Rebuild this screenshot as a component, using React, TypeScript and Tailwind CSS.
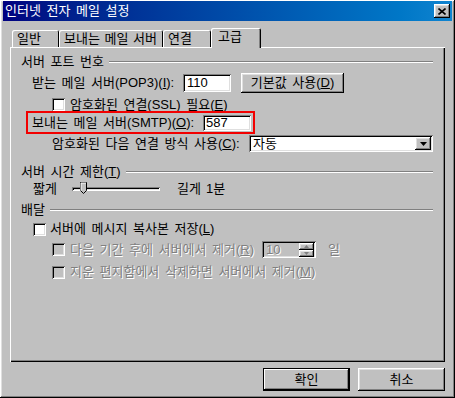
import React from 'react';

// classic 3D frames
const raised = 'shadow-[inset_-1px_-1px_#000,inset_1px_1px_#fff,inset_-2px_-2px_#808080,inset_2px_2px_#dfdfdf]';
const sunken = 'shadow-[inset_1px_1px_#808080,inset_-1px_-1px_#fff,inset_2px_2px_#000,inset_-2px_-2px_#dfdfdf]';
const dim = 'text-[#808080] [text-shadow:1px_1px_0_#fff]';

const Group: React.FC<{ children: React.ReactNode; className?: string }> = ({ children, className = '' }) => (
  <div className={`flex items-center h-[14px] ${className}`}>
    <span className="whitespace-nowrap">{children}</span>
    <div className="flex-1 ml-[5px] h-0 border-t border-b border-t-[#808080] border-b-white" />
  </div>
);

const Check: React.FC<{ disabled?: boolean }> = ({ disabled }) => (
  <div className={`w-[13px] h-[13px] shrink-0 ${disabled ? 'bg-[#c0c0c0]' : 'bg-white'} ${sunken}`} />
);

const tabs = [
  { label: '일반', w: 'w-[47px]' },
  { label: '보내는 메일 서버', w: 'w-[104px]' },
  { label: '연결', w: 'w-[48px]' },
];

export default function App() {
  return (
    <div className={`w-[455px] h-[398px] bg-[#c0c0c0] px-[3px] pt-px flex flex-col text-black text-[13px] leading-[14px] [word-spacing:2px] font-['Liberation_Sans','Noto_Sans_CJK_KR',sans-serif] ${raised}`}>
      {/* title bar */}
      <div className="h-[20px] flex items-center justify-between bg-linear-to-r from-[#000080] to-[#1084d0] pl-[2px] pr-[2px]">
        <span className="text-white">인터넷 전자 메일 설정</span>
        <div className={`w-[16px] h-[14px] bg-[#c0c0c0] flex items-center justify-center ${raised}`}>
          <svg width="8" height="7" viewBox="0 0 8 7">
            <path d="M0.5 0.5 L7.5 6.5 M7.5 0.5 L0.5 6.5" stroke="#000" strokeWidth="1.6" />
          </svg>
        </div>
      </div>

      {/* tabs */}
      <div className="mt-[7px] ml-[9px] flex items-end h-[19px] [word-spacing:1px]">
        {tabs.map((t) => (
          <div
            key={t.label}
            className={`${t.w} h-[17px] pl-[5px] flex items-center rounded-t-[2px] shadow-[inset_1px_1px_#fff,inset_-1px_0_#000] whitespace-nowrap`}
          >
            {t.label}
          </div>
        ))}
        <div className="relative z-10 w-[50px] h-[20px] -mb-px pl-[7px] pb-[2px] flex items-center rounded-t-[2px] bg-[#c0c0c0] shadow-[inset_1px_1px_#fff,inset_-1px_0_#000,inset_-2px_0_#808080]">
          고급
        </div>
      </div>

      {/* panel */}
      <div className="ml-[7px] w-[435px] h-[315px] pl-[11px] pr-[12px] pt-[8px] flex flex-col shadow-[inset_1px_1px_#fff,inset_-1px_-1px_#000,inset_-2px_-2px_#808080]">
        <Group>서버 포트 번호</Group>

        <div className="mt-[3px] h-[21px] pl-[11px] flex items-center">
          <span className="w-[151px] whitespace-nowrap">받는 메일 서버(POP3)(<u>I</u>):</span>
          <div className={`w-[48px] h-[18px] bg-white pl-[4px] flex items-center ${sunken}`}>110</div>
          <div className={`ml-[10px] w-[103px] h-[20px] flex items-center justify-center ${raised}`}>
            기본값 사용(<u>D</u>)
          </div>
        </div>

        <div className="mt-[5px] h-[13px] pl-[31px] flex items-center">
          <Check />
          <span className="ml-[5px] whitespace-nowrap">암호화된 연결(SSL) 필요(<u>E</u>)</span>
        </div>

        <div className="ml-[5px] w-[229px] h-[23px] border-2 border-[#f20000] pl-[4px] flex items-center">
          <span className="w-[171px] whitespace-nowrap">보내는 메일 서버(SMTP)(<u>O</u>):</span>
          <div className={`w-[48px] h-[16px] bg-white pl-[3px] flex items-center ${sunken}`}>587</div>
        </div>

        <div className="mt-px h-[17px] pl-[31px] flex items-center">
          <span className="w-[197px] whitespace-nowrap">암호화된 다음 연결 방식 사용(<u>C</u>):</span>
          <div className={`w-[184px] h-[17px] bg-white pl-[4px] pr-[2px] flex items-center justify-between ${sunken}`}>
            <span>자동</span>
            <div className={`w-[16px] h-[13px] bg-[#c0c0c0] flex items-center justify-center ${raised}`}>
              <svg width="7" height="4" viewBox="0 0 7 4">
                <path d="M0 0 H7 L3.5 4 Z" fill="#000" />
              </svg>
            </div>
          </div>
        </div>

        <Group className="mt-[13px]">서버 시간 제한(<u>T</u>)</Group>

        <div className="mt-[3px] h-[14px] pl-[12px] flex items-center">
          <span className="w-[39px]">짧게</span>
          <div className="relative w-[88px] h-[4px] shadow-[inset_1px_1px_#808080,inset_-1px_-1px_#fff,inset_2px_2px_#000,inset_-2px_-2px_#dfdfdf]">
            <svg className="absolute left-[8px] top-[-5px]" width="7" height="12" viewBox="0 0 7 12">
              <path d="M0.5 0.5 H6.5 V8.5 L3.5 11.5 L0.5 8.5 Z" fill="#c0c0c0" stroke="#000" strokeWidth="1" />
              <path d="M1 8.5 V1 H6" fill="none" stroke="#fff" strokeWidth="1" />
            </svg>
          </div>
          <span className="ml-[17px]">길게</span>
          <span className="ml-[5px]">1분</span>
        </div>

        <Group className="mt-[7px]">배달</Group>

        <div className="mt-[5px] h-[14px] pl-[12px] flex items-center">
          <Check />
          <span className="ml-[4px] whitespace-nowrap">서버에 메시지 복사본 저장(<u>L</u>)</span>
        </div>

        <div className="mt-[4px] h-[19px] pl-[31px] flex items-center">
          <Check disabled />
          <span className={`ml-[5px] w-[192px] whitespace-nowrap ${dim}`}>다음 기간 후에 서버에서 제거(<u>R</u>)</span>
          <div className={`w-[54px] h-[17px] bg-[#c0c0c0] pl-[4px] pr-[2px] flex items-center justify-between ${sunken}`}>
            <span className={dim}>10</span>
            <div className="flex flex-col">
              {[0, 1].map((i) => (
                <div key={i} className={`w-[15px] h-[7px] flex items-center justify-center ${raised}`}>
                  <svg width="5" height="3" viewBox="0 0 5 3">
                    <path d={i === 0 ? 'M2.5 0 L5 3 H0 Z' : 'M0 0 H5 L2.5 3 Z'} fill="#808080" />
                  </svg>
                </div>
              ))}
            </div>
          </div>
          <span className={`ml-[12px] ${dim}`}>일</span>
        </div>

        <div className="mt-[6px] h-[14px] pl-[31px] flex items-center">
          <Check disabled />
          <span className={`ml-[5px] whitespace-nowrap ${dim}`}>지운 편지함에서 삭제하면 서버에서 제거(<u>M</u>)</span>
        </div>
      </div>

      {/* buttons */}
      <div className="mt-[6px] ml-[260px] flex gap-[8px]">
        <div className="w-[87px] h-[23px] border border-black flex items-center justify-center shadow-[inset_-1px_-1px_#000,inset_1px_1px_#fff,inset_-2px_-2px_#808080]">
          확인
        </div>
        <div className={`w-[87px] h-[23px] flex items-center justify-center ${raised}`}>취소</div>
      </div>
    </div>
  );
}
